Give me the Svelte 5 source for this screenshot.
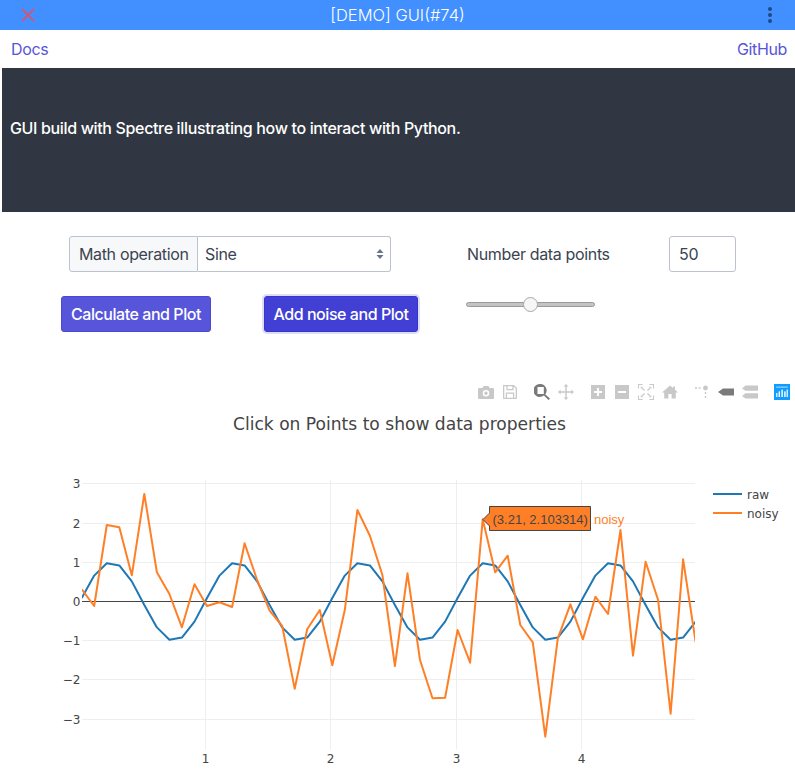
<script lang="ts">
  // pixel readings of the noisy trace, x is uniform
  const noisy = [
    589.3, 606, 525, 527.3, 575.3, 494, 572.3, 594, 627.3, 584.3,
    606, 602.3, 607, 543.3, 580, 610.7, 626, 688.7, 629.3, 610,
    665.3, 610, 510, 535.7, 575, 666, 573.3, 660, 698.3, 697.7,
    630, 662.7, 519.3, 572.3, 555.7, 625, 642.3, 736.7, 638.3, 604.3,
    639.3, 596.7, 614, 530, 655.7, 561.7, 600, 713.7, 559.3, 642.3,
  ];
  const xAt = (i: number) => 81.7 + i * 12.53;
  const toPoints = (ys: number[]) =>
    ys.map((y, i) => `${xAt(i).toFixed(1)},${y.toFixed(1)}`).join(" ");

  const raw = noisy.map((_, i) => 601.5 - 39.3 * Math.sin((2 * Math.PI * i) / 10 + 0.09));

  const xTicks = [
    { x: 205.5, label: "1" },
    { x: 330.5, label: "2" },
    { x: 456.5, label: "3" },
    { x: 581.5, label: "4" },
  ];
  const yTicks = [
    { y: 483.5, label: "3" },
    { y: 523.5, label: "2" },
    { y: 562.5, label: "1" },
    { y: 640.5, label: "−1" },
    { y: 679.5, label: "−2" },
    { y: 719.5, label: "−3" },
  ];
</script>

<div class="page">
  <header class="topbar">
    <svg class="close" width="14" height="14" viewBox="0 0 14 14">
      <path d="M1 1 L13 13 M13 1 L1 13" />
    </svg>
    <span class="title">[DEMO] GUI(#74)</span>
    <span class="menu"><i></i><i></i><i></i></span>
  </header>

  <nav class="nav">
    <a href="#docs">Docs</a>
    <a href="#github">GitHub</a>
  </nav>

  <section class="hero">
    <p>GUI build with Spectre illustrating how to interact with Python.</p>
  </section>

  <section class="controls">
    <div class="col-left">
      <div class="input-group">
        <span class="addon">Math operation</span>
        <div class="select-wrap">
          <select>
            <option>Sine</option>
            <option>Cosine</option>
          </select>
          <svg class="caret" width="8" height="12" viewBox="0 0 8 12">
            <path d="M4 1 L7.5 5 H0.5 Z M4 11 L0.5 7 H7.5 Z" />
          </svg>
        </div>
      </div>
      <div class="buttons">
        <button class="btn">Calculate and Plot</button>
        <button class="btn active">Add noise and Plot</button>
      </div>
    </div>
    <div class="col-right">
      <div class="points">
        <label for="points">Number data points</label>
        <input id="points" class="number" type="text" value="50" />
      </div>
      <input class="slider" type="range" min="0" max="100" value="50" />
    </div>
  </section>

  <section class="plot">
    <div class="modebar">
      <div class="group">
        <svg viewBox="0 0 16 16"><path fill-rule="evenodd" d="M1 4 H4.5 L5.5 2 H10.5 L11.5 4 H15 A1 1 0 0 1 16 5 V14 A1 1 0 0 1 15 15 H1 A1 1 0 0 1 0 14 V5 A1 1 0 0 1 1 4 Z M8 6 A3.3 3.3 0 1 0 8 12.6 A3.3 3.3 0 1 0 8 6 Z M8 7.6 A1.7 1.7 0 1 1 8 11 A1.7 1.7 0 1 1 8 7.6 Z" /></svg>
        <svg viewBox="0 0 16 16"><path fill-rule="evenodd" d="M1.5 1 H12 L15 4 V14 A1 1 0 0 1 14 15 H2 A1 1 0 0 1 1 14 V2 A1 1 0 0 1 1.5 1 Z M2.3 2.3 V13.7 H3.8 V8.5 H12.2 V13.7 H13.7 V4.6 L11.6 2.4 V6.2 H4.4 V2.3 Z M5.6 2.3 V5 H10.3 V2.3 Z M5 9.8 V13.7 H11 V9.8 Z" /></svg>
      </div>
      <div class="group">
        <svg class="on" viewBox="0 0 16 16"><path fill-rule="evenodd" d="M6.5 0 A6.5 6.5 0 0 1 11.3 10.4 L16 14.6 L14.5 16 L9.9 11.6 A6.5 6.5 0 1 1 6.5 0 Z M3.5 3 V10 H9.8 V3 Z" /></svg>
        <svg viewBox="0 0 16 16"><path d="M8 0 L10.4 2.6 H8.7 V7.3 H13.4 V5.6 L16 8 L13.4 10.4 V8.7 H8.7 V13.4 H10.4 L8 16 L5.6 13.4 H7.3 V8.7 H2.6 V10.4 L0 8 L2.6 5.6 V7.3 H7.3 V2.6 H5.6 Z" /></svg>
      </div>
      <div class="group">
        <svg viewBox="0 0 16 16"><path fill-rule="evenodd" d="M1 1 H15 V15 H1 Z M7 4 V7 H4 V9 H7 V12 H9 V9 H12 V7 H9 V4 Z" /></svg>
        <svg viewBox="0 0 16 16"><path fill-rule="evenodd" d="M1 1 H15 V15 H1 Z M4 7 V9 H12 V7 Z" /></svg>
        <svg viewBox="0 0 16 16"><path d="M0 0 H4.5 V1 H1 V4.5 H0 Z M11.5 0 H16 V4.5 H15 V1 H11.5 Z M0 11.5 H1 V15 H4.5 V16 H0 Z M15 11.5 H16 V16 H11.5 V15 H15 Z M4 3.2 L7 6 L6 7 L3.2 4 L2.8 6 V2.8 H6 Z M12 3.2 L9 6 L10 7 L12.8 4 L13.2 6 V2.8 H10 Z M4 12.8 L7 10 L6 9 L3.2 12 L2.8 10 V13.2 H6 Z M12 12.8 L9 10 L10 9 L12.8 12 L13.2 10 V13.2 H10 Z" /></svg>
        <svg viewBox="0 0 16 16"><path d="M8 1.5 L11 4 V2.5 H13 V5.7 L16 8.4 H13.8 V14.5 H9.6 V10 H6.4 V14.5 H2.2 V8.4 H0 Z" /></svg>
      </div>
      <div class="group">
        <svg viewBox="0 0 16 16">
          <circle cx="11.5" cy="4" r="2.4" />
          <path d="M1 3.2 H3 V4.8 H1 Z M4.6 3.2 H6.6 V4.8 H4.6 Z M10.8 8 H12.2 V10 H10.8 Z M10.8 12 H12.2 V14 H10.8 Z" />
        </svg>
        <svg class="on" viewBox="0 0 16 16"><path d="M0 8 L5 4.5 H16 V11.5 H5 Z" /></svg>
        <svg viewBox="0 0 16 16"><path d="M0 4.5 L3.5 1.5 H16 V6.8 H3.5 Z M0 12 L3.5 9.2 H16 V14.5 H3.5 Z" /></svg>
      </div>
      <div class="group">
        <svg class="logo" viewBox="0 0 16 16">
          <rect width="16" height="16" fill="#119dff" />
          <g fill="#fff">
            <rect x="4.6" y="7.4" width="1.4" height="5.6" />
            <rect x="7.4" y="5.6" width="1.4" height="7.4" />
            <rect x="10.2" y="7.4" width="1.4" height="5.6" />
            <rect x="12.6" y="5.6" width="1.2" height="7.4" />
            <rect x="2.2" y="9" width="1.2" height="4" />
            <rect x="2.2" y="2.6" width="11.6" height="1" opacity="0.7" />
          </g>
        </svg>
      </div>
    </div>

    <svg class="chart" width="795" height="396" viewBox="0 380 795 396">
      <defs>
        <clipPath id="plot-area"><rect x="82" y="476" width="613" height="274" /></clipPath>
      </defs>

      <text class="chart-title" x="399.5" y="429.5" text-anchor="middle">Click on Points to show data properties</text>

      {#each yTicks as t}
        <line class="grid" x1="82" x2="695" y1={t.y} y2={t.y} />
        <text class="tick" x="80.5" y={t.y + 4.5} text-anchor="end">{t.label}</text>
      {/each}
      {#each xTicks as t}
        <line class="grid" x1={t.x} x2={t.x} y1="480" y2="749.5" />
        <text class="tick" x={t.x} y="763" text-anchor="middle">{t.label}</text>
      {/each}
      <line class="zero" x1="82" x2="695" y1="601.5" y2="601.5" />
      <text class="tick" x="80.5" y="606" text-anchor="end">0</text>

      <g clip-path="url(#plot-area)">
        <polyline class="trace raw" points={toPoints(raw)} />
        <polyline class="trace noisy" points={toPoints(noisy)} />
      </g>

      <path class="hover-box" d="M483 519.5 L489.5 513 V506.5 H590.5 V530.5 H489.5 V526 Z" />
      <text class="hover-text" x="492.5" y="524">(3.21, 2.103314)</text>
      <text class="hover-name" x="594" y="524">noisy</text>

      <line class="trace raw" x1="713" x2="742" y1="494" y2="494" />
      <text class="legend" x="747" y="498.5">raw</text>
      <line class="trace noisy" x1="713" x2="742" y1="513" y2="513" />
      <text class="legend" x="747" y="517.5">noisy</text>
    </svg>
  </section>
</div>

<style>
  :global(body) {
    margin: 0;
    overflow: hidden;
    background: #fff;
  }

  .page {
    font-family: Inter, "Liberation Sans", sans-serif;
    font-size: 16px;
    letter-spacing: -0.35px;
    color: #3b4351;
    height: 776px;
    overflow: hidden;
  }

  .topbar {
    height: 30px;
    background: #428fff;
    display: flex;
    align-items: center;
    justify-content: space-between;
    padding: 0 21px;
    color: #fff;
    position: relative;
  }

  .close {
    fill: none;
    stroke: #ee4b5a;
    stroke-width: 1.6;
  }

  .title {
    font-size: 16.5px;
    font-weight: 300;
    letter-spacing: 0;
    position: absolute;
    left: 0;
    right: 0;
    text-align: center;
  }

  .menu {
    display: flex;
    flex-direction: column;
    gap: 2px;
    margin-right: 2px;
  }

  .menu i {
    width: 4px;
    height: 4px;
    border-radius: 50%;
    background: #1f4a86;
  }

  .nav {
    height: 38px;
    display: flex;
    align-items: center;
    justify-content: space-between;
    padding: 0 8px 0 11px;
  }

  .nav a {
    color: #5755d9;
    text-decoration: none;
  }

  .hero {
    margin-left: 2px;
    height: 144px;
    box-sizing: border-box;
    padding: 48px 8px 0;
    background: #303742;
    color: #fff;
  }

  .hero p {
    margin: 0;
    line-height: 24px;
    font-weight: 500;
  }

  .controls {
    display: flex;
    padding: 24px 0 0 61px;
    height: 168px;
    box-sizing: border-box;
  }

  .col-left {
    width: 406px;
  }

  .input-group {
    display: flex;
    width: 322px;
    height: 36px;
    margin-left: 8px;
  }

  .addon {
    box-sizing: border-box;
    width: 129px;
    display: flex;
    align-items: center;
    padding-left: 9px;
    background: #f7f8f9;
    border: 1px solid #bcc3ce;
    border-radius: 3px 0 0 3px;
  }

  .select-wrap {
    flex: 1;
    position: relative;
  }

  select {
    appearance: none;
    width: 100%;
    height: 36px;
    box-sizing: border-box;
    border: 1px solid #bcc3ce;
    border-left: 0;
    border-radius: 0 3px 3px 0;
    padding: 0 7px;
    background: #fff;
    color: #3b4351;
    font: inherit;
    letter-spacing: inherit;
  }

  .caret {
    position: absolute;
    right: 7px;
    top: 12px;
    fill: #66758c;
  }

  .buttons {
    display: flex;
    gap: 53px;
    margin-top: 24px;
  }

  .btn {
    height: 36px;
    width: 150px;
    padding: 0;
    border: 1px solid #4b48d6;
    border-radius: 3px;
    background: #5755d9;
    color: #fff;
    font: inherit;
    font-weight: 500;
    letter-spacing: -0.45px;
  }

  .btn.active {
    width: 154px;
    background: #4240d4;
    border-color: #3634d2;
    box-shadow: 0 0 0 2px rgba(87, 85, 217, 0.2);
  }

  .points {
    display: flex;
    align-items: center;
    height: 36px;
  }

  .points label {
    width: 202px;
  }

  .number {
    box-sizing: border-box;
    width: 67px;
    height: 36px;
    padding: 0 9px;
    border: 1px solid #bcc3ce;
    border-radius: 3px;
    color: #3b4351;
    font: inherit;
    letter-spacing: inherit;
  }

  .slider {
    display: block;
    appearance: none;
    -webkit-appearance: none;
    width: 129px;
    height: 16px;
    margin: 24px 0 0 -1px;
    background: transparent;
  }

  .slider::-webkit-slider-runnable-track {
    height: 5px;
    border-radius: 3px;
    background: #c4c4c4;
    border: 1px solid #9a9a9a;
    box-sizing: border-box;
  }

  .slider::-webkit-slider-thumb {
    -webkit-appearance: none;
    width: 15px;
    height: 15px;
    margin-top: -6px;
    border-radius: 50%;
    background: #f6f6f6;
    border: 1px solid #a8a8a8;
    box-sizing: border-box;
  }

  .plot {
    position: relative;
  }

  .modebar {
    position: absolute;
    top: 4px;
    right: 1px;
    display: flex;
    gap: 8px;
  }

  .group {
    display: flex;
  }

  .group svg {
    width: 16px;
    height: 16px;
    margin: 0 4px;
    fill: #c8c8c8;
  }

  .group svg.on {
    fill: #7a7a7a;
  }

  .chart {
    display: block;
    font-family: "DejaVu Sans", sans-serif;
    letter-spacing: 0;
  }

  .chart-title {
    font-size: 17.1px;
    fill: #444;
  }

  .grid {
    stroke: #eee;
    stroke-width: 1;
  }

  .zero {
    stroke: #444;
    stroke-width: 1;
  }

  .tick,
  .legend {
    font-size: 12px;
    fill: #444;
  }

  .trace {
    fill: none;
    stroke-width: 2;
    stroke-linejoin: round;
  }

  .trace.raw {
    stroke: #1f77b4;
  }

  .trace.noisy {
    stroke: #ff7f27;
  }

  .hover-box {
    fill: #ff7f27;
    stroke: #444;
    stroke-width: 1;
  }

  .hover-text,
  .hover-name {
    font-family: "Liberation Sans", sans-serif;
    font-size: 13px;
  }

  .hover-text {
    fill: #444;
  }

  .hover-name {
    fill: #ff7f27;
  }
</style>
